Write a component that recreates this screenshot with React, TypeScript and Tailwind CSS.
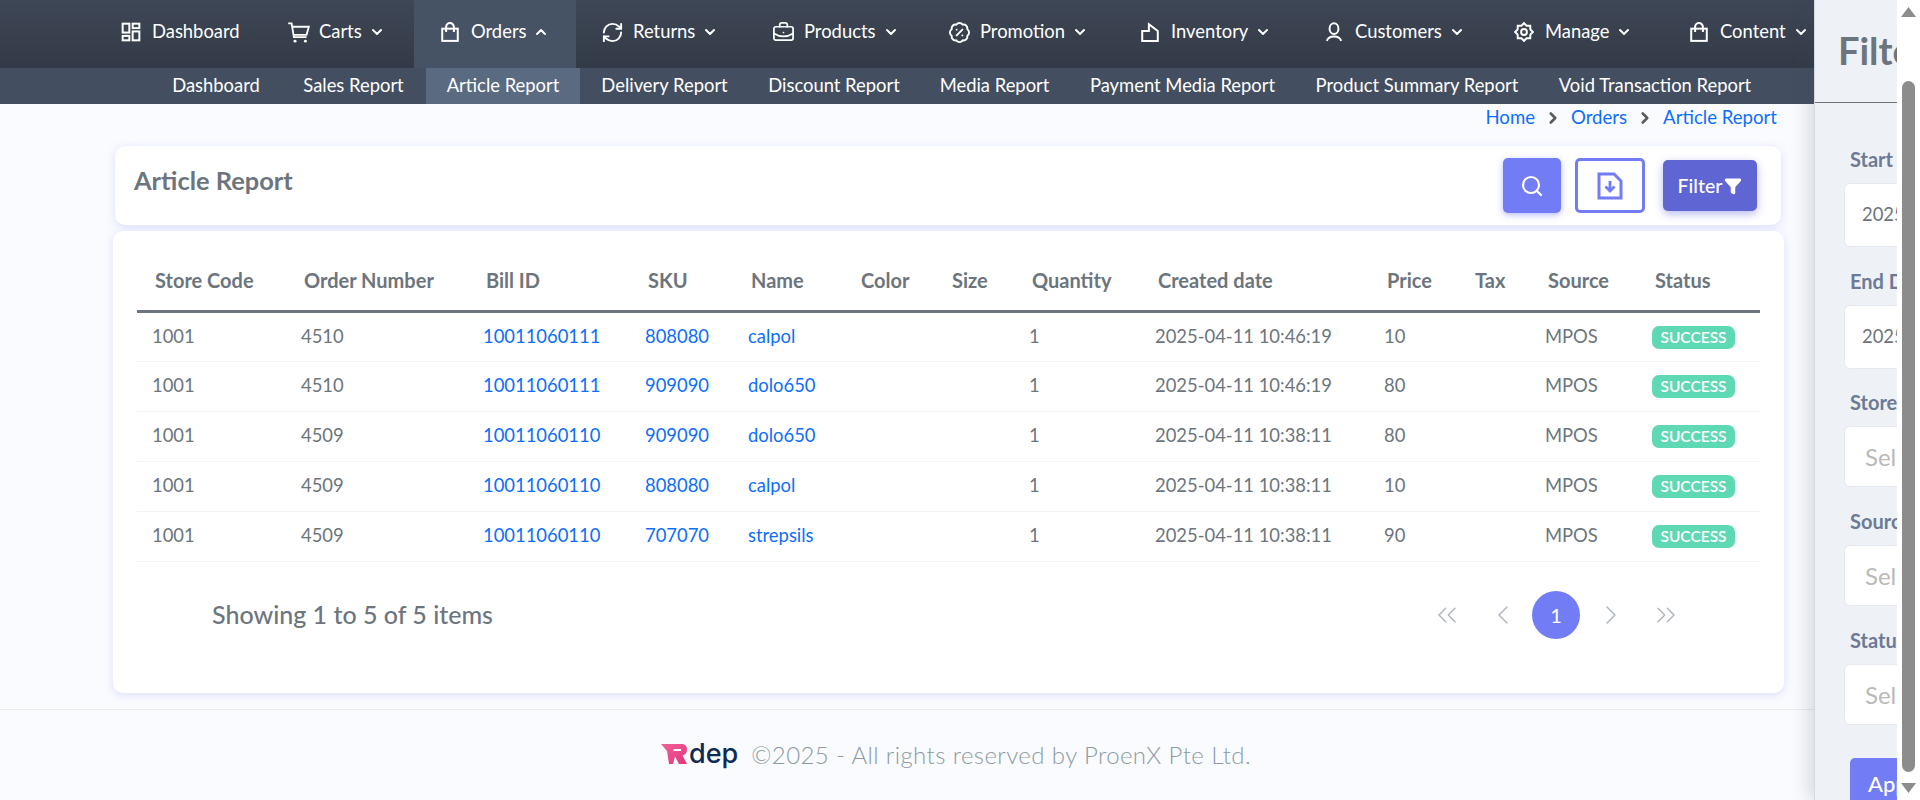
import { BadgePercent, BriefcaseBusiness, ChevronDown, ChevronLeft, ChevronRight, ChevronUp, ChevronsLeft, ChevronsRight, Filter, RefreshCw, Search } from "lucide-react";
import type { ReactNode } from "react";

const iconClass = "w-[20px] h-[20px] shrink-0 text-white";
const bigIconClass = "w-[23px] h-[23px] -mx-[1.5px] shrink-0 text-white";

const DashIcon = () => (
  <svg viewBox="0 0 18 18" className={iconClass} fill="none" stroke="currentColor" strokeWidth="1.8">
    <rect x="1.5" y="1.5" width="6" height="8" />
    <rect x="10.5" y="1.5" width="6" height="4" />
    <rect x="1.5" y="12.5" width="6" height="4" />
    <rect x="10.5" y="8.5" width="6" height="8" />
  </svg>
);

const CartIcon = () => (
  <svg viewBox="0 0 20 20" className={bigIconClass} fill="none" stroke="currentColor" strokeWidth="1.6">
    <path d="M1 2h3l2 12h11" />
    <path d="M4.500 5H19l-2 7H6" />
    <circle cx="7" cy="17.500" r="1.300" fill="currentColor" stroke="none" />
    <circle cx="16" cy="17.500" r="1.300" fill="currentColor" stroke="none" />
  </svg>
);

const BagIcon = () => (
  <svg viewBox="0 0 18 18" className={iconClass} fill="none" stroke="currentColor" strokeWidth="1.8">
    <rect x="2" y="6" width="14" height="11" />
    <path d="M5.5 9V4.5a3.5 3.5 0 0 1 7 0V9" />
  </svg>
);

const InventoryIcon = () => (
  <svg viewBox="0 0 18 18" className={iconClass} fill="none" stroke="currentColor" strokeWidth="1.8">
    <path d="M2 8l6 0 0-6 8 6v9H2z" />
  </svg>
);

const UserIcon = () => (
  <svg viewBox="0 0 18 18" className={iconClass} fill="none" stroke="currentColor" strokeWidth="1.8">
    <ellipse cx="9" cy="6" rx="4" ry="4.8" />
    <path d="M2.5 17c1-3 3.5-4 6.5-4s5.500 1 6.500 4" />
  </svg>
);

const GearIcon = () => (
  <svg viewBox="0 0 18 18" className={iconClass} fill="none" stroke="currentColor" strokeWidth="1.8">
    <path d="M9 1l2.3 2.4 3.300-.1.100 3.300L17 9l-2.300 2.400-.1 3.300-3.300-.1L9 17l-2.300-2.400-3.300.1-.1-3.300L1 9l2.300-2.400.1-3.300 3.300.1z" />
    <circle cx="9" cy="9" r="2.6" />
  </svg>
);

const navItems: { label: string; icon: ReactNode; width: string; arrow?: boolean; active?: boolean }[] = [
  { label: "Dashboard", icon: <DashIcon />, width: "w-[167px]" },
  { label: "Carts", icon: <CartIcon />, width: "w-[152px]", arrow: true },
  { label: "Orders", icon: <BagIcon />, width: "w-[162px]", arrow: true, active: true },
  { label: "Returns", icon: <RefreshCw className={bigIconClass} strokeWidth={2} />, width: "w-[171px]", arrow: true },
  { label: "Products", icon: <BriefcaseBusiness className={bigIconClass} strokeWidth={1.8} />, width: "w-[176px]", arrow: true },
  { label: "Promotion", icon: <BadgePercent className={bigIconClass} strokeWidth={2} />, width: "w-[191px]", arrow: true },
  { label: "Inventory", icon: <InventoryIcon />, width: "w-[184px]", arrow: true },
  { label: "Customers", icon: <UserIcon />, width: "w-[190px]", arrow: true },
  { label: "Manage", icon: <GearIcon />, width: "w-[175px]", arrow: true },
  { label: "Content", icon: <BagIcon />, width: "w-[160px]", arrow: true },
];

const subItems = [
  { label: "Dashboard", width: "w-[130px]" },
  { label: "Sales Report", width: "w-[145px]" },
  { label: "Article Report", width: "w-[154px]", active: true },
  { label: "Delivery Report", width: "w-[169px]" },
  { label: "Discount Report", width: "w-[170px]" },
  { label: "Media Report", width: "w-[151px]" },
  { label: "Payment Media Report", width: "w-[225px]" },
  { label: "Product Summary Report", width: "w-[244px]" },
  { label: "Void Transaction Report", width: "w-[232px]" },
];

const columns = [
  { label: "Store Code", width: "w-[149px]" },
  { label: "Order Number", width: "w-[182px]" },
  { label: "Bill ID", width: "w-[162px]" },
  { label: "SKU", width: "w-[103px]" },
  { label: "Name", width: "w-[110px]" },
  { label: "Color", width: "w-[91px]" },
  { label: "Size", width: "w-[80px]" },
  { label: "Quantity", width: "w-[126px]" },
  { label: "Created date", width: "w-[229px]" },
  { label: "Price", width: "w-[88px]" },
  { label: "Tax", width: "w-[73px]" },
  { label: "Source", width: "w-[107px]" },
  { label: "Status", width: "w-[123px]" },
];

const rows = [
  { order: "4510", bill: "10011060111", sku: "808080", name: "calpol", date: "2025-04-11 10:46:19", price: "10" },
  { order: "4510", bill: "10011060111", sku: "909090", name: "dolo650", date: "2025-04-11 10:46:19", price: "80" },
  { order: "4509", bill: "10011060110", sku: "909090", name: "dolo650", date: "2025-04-11 10:38:11", price: "80" },
  { order: "4509", bill: "10011060110", sku: "808080", name: "calpol", date: "2025-04-11 10:38:11", price: "10" },
  { order: "4509", bill: "10011060110", sku: "707070", name: "strepsils", date: "2025-04-11 10:38:11", price: "90" },
];

const cell = "pl-[15px] text-left font-normal whitespace-nowrap";

const FilterField = ({ label, value, top, h }: { label: string; value: string; top: string; h: string }) => (
  <div className={top}>
    <p className="text-[20px] leading-[24px] font-bold text-[#6c7a96] ml-[6px]">{label}</p>
    <div
      className={`${h} mt-[12px] w-[300px] bg-white rounded-[6px] border border-[#e6e9ef] flex items-center ${
        value.startsWith("2025") ? "pl-[17px] text-[18.400px] text-[#6c757d]" : "pl-[20px] text-[24px] text-[#b9b9b9]"
      }`}
    >
      {value}
    </div>
  </div>
);

const App = () => {
  return (
    <div className="relative w-[1920px] h-[800px] overflow-hidden bg-[#fafbfe] font-['Lato',sans-serif] text-[#6c757d]">
      <div className="h-[68px] flex pl-[95px] bg-gradient-to-b from-[#3e4756] to-[#333a47] text-white text-[18.400px]">
        {navItems.map((item) => (
          <div key={item.label} className={`${item.width} h-[68px] flex items-center pl-[26px] pb-[4px] shrink-0 ${item.active ? "bg-[#465364]" : ""}`}>
            {item.icon}
            <span className="ml-[11px]">{item.label}</span>
            {item.arrow &&
              (item.active ? (
                <ChevronUp className="w-[16px] h-[16px] ml-[7px]" strokeWidth={3} />
              ) : (
                <ChevronDown className="w-[16px] h-[16px] ml-[7px]" strokeWidth={3} />
              ))}
          </div>
        ))}
      </div>
      <div className="h-[36px] flex pl-[151px] bg-[#434f60] text-white text-[18.400px]">
        {subItems.map((item) => (
          <div key={item.label} className={`${item.width} h-full flex items-center justify-center shrink-0 ${item.active ? "bg-[#5a6a80]" : ""}`}>
            {item.label}
          </div>
        ))}
      </div>

      <div className="h-[42px] pr-[143px] flex justify-end items-start text-[18.600px] text-[#0d6efd]">
        <span>Home</span>
        <ChevronRight className="w-[18px] h-[18px] mx-[9px] mt-[5px] text-[#5c5c5c]" strokeWidth={3.5} />
        <span>Orders</span>
        <ChevronRight className="w-[18px] h-[18px] mx-[9px] mt-[5px] text-[#5c5c5c]" strokeWidth={3.5} />
        <span>Article Report</span>
      </div>

      <div className="ml-[115px] w-[1666px] h-[79px] bg-white rounded-[10px] shadow-[0_2px_10px_rgba(114,124,245,0.22)] flex items-center pl-[19px]">
        <h1 className="text-[25.400px] font-bold text-[#6c757d] -mt-[10px]">Article Report</h1>
        <div className="ml-auto flex items-center">
          <button className="w-[58px] h-[55px] rounded-[5px] bg-[#727cf5] flex items-center justify-center shadow-[0_2px_6px_rgba(114,124,245,0.5)]">
            <Search className="w-[24px] h-[24px] text-white" strokeWidth={2.2} />
          </button>
          <button className="ml-[14px] w-[70px] h-[55px] rounded-[5px] border-[3px] border-[#727cf5] bg-white flex items-center justify-center">
            <svg viewBox="0 0 26 28" className="w-[26px] h-[28px]" fill="none" stroke="#727cf5" strokeWidth="3">
              <path d="M2 2h15l7 7v17H2z" />
              <path d="M13 9v10M8.500 14.500l4.500 4.500 4.500-4.500" strokeWidth="2.800" />
            </svg>
          </button>
          <button className="ml-[18px] mr-[24px] w-[94px] h-[51px] rounded-[5px] bg-[#6065d4] text-white text-[19.500px] font-medium flex items-center justify-center shadow-[0_3px_8px_rgba(96,101,212,0.45)]">
            Filter
            <Filter className="w-[18px] h-[18px] ml-[2px] fill-white" strokeWidth={2} />
          </button>
        </div>
      </div>

      <div className="mt-[6px] ml-[113px] w-[1671px] h-[462px] bg-white rounded-[10px] shadow-[0_2px_10px_rgba(114,124,245,0.22)] pt-[21px] pl-[24px]">
        <table className="table-fixed w-[1623px] border-collapse text-[18.400px]">
          <colgroup>
            {columns.map((c) => (
              <col key={c.label} className={c.width} />
            ))}
          </colgroup>
          <thead>
            <tr className="h-[59px] border-b-[3px] border-[#6c757d]">
              {columns.map((c) => (
                <th key={c.label} className="pl-[18px] pb-[2px] text-left font-bold whitespace-nowrap text-[20px] text-[#6c757d]">
                  {c.label}
                </th>
              ))}
            </tr>
          </thead>
          <tbody>
            {rows.map((r, key) => (
              <tr key={key} className="h-[50px] border-b border-[#f1f3f5]">
                <td className={cell}>1001</td>
                <td className={cell}>{r.order}</td>
                <td className={`${cell} text-[#0d6efd]`}>{r.bill}</td>
                <td className={`${cell} text-[#0d6efd]`}>{r.sku}</td>
                <td className={`${cell} text-[#0d6efd]`}>{r.name}</td>
                <td className={cell}></td>
                <td className={cell}></td>
                <td className={cell}>1</td>
                <td className={cell}>{r.date}</td>
                <td className={cell}>{r.price}</td>
                <td className={cell}></td>
                <td className={cell}>MPOS</td>
                <td className={cell}>
                  <span className="inline-flex w-[83px] h-[23px] items-center justify-center rounded-[7px] bg-[#5fd9b3] text-white text-[15.500px] font-semibold">SUCCESS</span>
                </td>
              </tr>
            ))}
          </tbody>
        </table>
        <div className="mt-[29px] h-[48px] flex items-center pl-[75px]">
          <span className="text-[25px] font-medium">Showing 1 to 5 of 5 items</span>
          <div className="ml-auto mr-[102px] flex items-center text-[#adb5bd]">
            <ChevronsLeft className="w-[32px] h-[32px]" strokeWidth={1.1} />
            <ChevronLeft className="w-[32px] h-[32px] ml-[24px]" strokeWidth={1.1} />
            <span className="w-[48px] h-[48px] ml-[13px] rounded-full bg-[#727cf5] text-white text-[20px] flex items-center justify-center">1</span>
            <ChevronRight className="w-[32px] h-[32px] ml-[15px]" strokeWidth={1.1} />
            <ChevronsRight className="w-[32px] h-[32px] ml-[23px]" strokeWidth={1.1} />
          </div>
        </div>
      </div>

      <div className="mt-[16px] h-[91px] border-t border-[#e8eaef] flex items-center pl-[661px]">
        <div className="flex items-center -mt-[2px]">
          <svg viewBox="0 0 26 20" className="w-[26px] h-[20px]">
            <defs>
              <linearGradient id="rdep" x1="0" y1="0" x2="1" y2="1">
                <stop offset="0" stopColor="#f0649a" />
                <stop offset="1" stopColor="#e5327c" />
              </linearGradient>
            </defs>
            <path d="M0 0h20c4 0 6 2 6 5.500s-2 5.500-4.500 6L26 20h-8l-4-7.500-2 7.500H8L6 7z" fill="url(#rdep)" />
            <path d="M13 5h6.500c1 0 1 2 0 2H12z" fill="#ffffff" />
          </svg>
          <span className="ml-[2px] font-['Inter',sans-serif] font-medium text-[27px] leading-[20px] text-[#0f2a55]">dep</span>
        </div>
        <span className="ml-[13px] text-[24px] tracking-[0.4px] font-light text-[#8c9aa2]">©2025 - All rights reserved by ProenX Pte Ltd.</span>
      </div>

      {/* offcanvas filter, cut off by the window */}
      <div className="absolute left-[1814px] top-0 w-[83px] h-[800px] overflow-hidden bg-[#eef2f7] shadow-[-6px_0_16px_rgba(60,70,90,0.18)] border-l border-[#d5d8de]">
        <div className="w-[400px]">
          <div className="h-[103px] border-b border-[#6c757d] pl-[23px] pt-[26px] text-[38px] leading-[48px] font-bold text-[#6c757d]">Filter</div>
          <div className="pl-[29px]">
            <FilterField label="Start Date" value="2025-04-01" top="mt-[44px]" h="h-[64px]" />
            <FilterField label="End Date" value="2025-04-11" top="mt-[22px]" h="h-[64px]" />
            <FilterField label="Store" value="Select" top="mt-[21px]" h="h-[61px]" />
            <FilterField label="Source" value="Select" top="mt-[22px]" h="h-[61px]" />
            <FilterField label="Status" value="Select" top="mt-[22px]" h="h-[61px]" />
            <button className="mt-[33px] ml-[6px] w-[120px] h-[50px] rounded-t-[5px] bg-[#727cf5] text-white text-[22px] font-medium text-left pl-[18px]">Apply</button>
          </div>
        </div>
      </div>

      {/* browser scrollbar */}
      <div className="absolute right-0 top-0 w-[23px] h-[800px] bg-white">
        <svg viewBox="0 0 15 10" className="absolute left-[4px] top-[7px] w-[15px] h-[10px]">
          <path d="M7.500 0L15 10H0z" fill="#8c8c8c" />
        </svg>
        <div className="absolute left-[5px] top-[81px] w-[13px] h-[691px] rounded-full bg-[#8c8c8c]"></div>
        <svg viewBox="0 0 15 10" className="absolute left-[4px] top-[783px] w-[15px] h-[10px]">
          <path d="M0 0h15L7.500 10z" fill="#8c8c8c" />
        </svg>
      </div>
    </div>
  );
};

export default App;
